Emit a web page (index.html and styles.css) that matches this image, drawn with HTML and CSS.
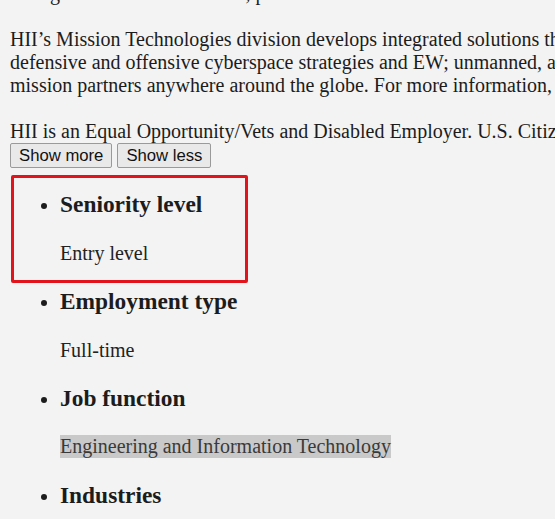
FILE: index.html
```html
<!DOCTYPE html>
<html lang="en">
<head>
	<meta charset="UTF-8">
	<title>Job description</title>
	<link rel="stylesheet" href="styles.css">
</head>
<body>
	<div class="page">
		<div class="description">
			strong mission in all domains, promises to deliver the nation and the world the most advanced mission solutions.<br><br>
			HII’s Mission Technologies division develops integrated solutions that enable today’s connected, all-domain force.<br>
			defensive and offensive cyberspace strategies and EW; unmanned, autonomous systems; live, virtual and constructive training;<br>
			mission partners anywhere around the globe. For more information, please visit our website.<br><br>
			HII is an Equal Opportunity/Vets and Disabled Employer. U.S. Citizenship is required for this position.
		</div>
		<div class="toggles">
			<button type="button">Show more</button>
			<button type="button">Show less</button>
		</div>
		<ul class="criteria">
			<li>
				<h3>Seniority level</h3>
				<span>Entry level</span>
			</li>
			<li>
				<h3>Employment type</h3>
				<span>Full-time</span>
			</li>
			<li>
				<h3>Job function</h3>
				<span class="marked">Engineering and Information Technology</span>
			</li>
			<li>
				<h3>Industries</h3>
				<span>Defense and Space Manufacturing</span>
			</li>
		</ul>
		<!-- annotation drawn over the first criterion -->
		<div class="highlight-box"></div>
	</div>
</body>
</html>
```

FILE: styles.css
```css
*{
	margin: 0;
	padding: 0;
}
html, body{
	height: 100%;
	overflow: hidden;
}
body{
	background: #f3f3f3;
	color: #1c1c1c;
	font-family: "Liberation Serif", "Times New Roman", serif;
	font-size: 20px;
	line-height: 23px;
}
.page{
	position: relative;
	padding: 0 10px;
	margin-top: -18px;
	width: 1200px;
}
.description{
	white-space: nowrap;
}
.toggles{
	height: 25px;
	display: flex;
	gap: 5px;
}
.toggles button{
	font-family: "Liberation Sans", Arial, sans-serif;
	font-size: 16.7px;
	line-height: 19px;
	color: #111;
	background: #e9e9e9;
	border: 1px solid #9a9a9a;
	border-radius: 2px;
	padding: 2px 8px;
	height: 25px;
}
.criteria{
	list-style: disc;
	padding-left: 50px;
}
.criteria h3{
	font-size: 23.4px;
	line-height: 27px;
	font-weight: bold;
	margin: 23.4px 0;
}
.criteria span{
	display: inline-block;
	color: #222;
}
.criteria .marked{
	background: #c9c9c9;
	color: #3a3a3a;
}
.highlight-box{
	position: absolute;
	left: 11px;
	top: 193px;
	width: 231px;
	height: 102px;
	border: 3px solid #e2131b;
	border-radius: 2px;
}
```
